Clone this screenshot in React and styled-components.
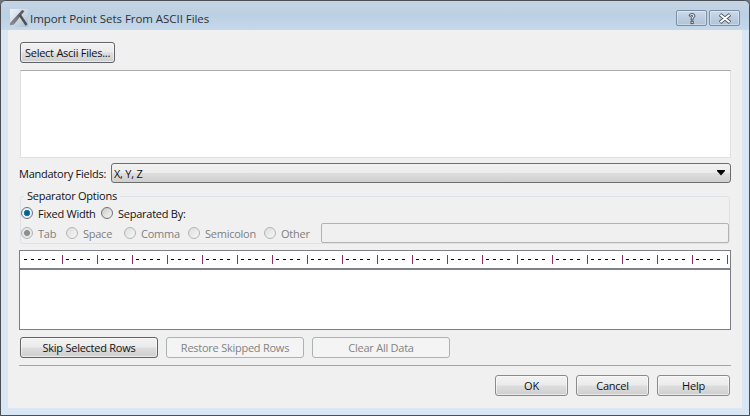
import React from 'react'
import styled, { createGlobalStyle } from 'styled-components'

const GlobalStyle = createGlobalStyle`
    html, body {
        margin: 0;
        padding: 0;
        background: #6f7378;
    }
    * { box-sizing: border-box; }
`

const Window = styled.div`
    width: 750px;
    height: 416px;
    display: flex;
    flex-direction: column;
    border: 1px solid #4a4f55;
    border-radius: 6px 6px 0 0;
    background: #d9e6f3;
    font-family: "Open Sans", "Noto Sans", "Liberation Sans", sans-serif;
    font-size: 11px;
    letter-spacing: -0.25px;
    color: #111;
    overflow: hidden;
`

const TitleBar = styled.div`
    height: 29px;
    flex: none;
    display: flex;
    align-items: center;
    padding: 5px 9px 0 9px;
    background: linear-gradient(180deg, #c4d4e4 0%, #bcd0e3 50%, #c6d9eb 100%);
`

const TitleText = styled.span`
    margin-left: 2px;
    font-size: 11.5px;
    letter-spacing: -0.05px;
    color: #2c3137;
    flex: 1;
    white-space: nowrap;
`

const CaptionButton = styled.div`
    width: 31px;
    height: 16px;
    margin-left: 2px;
    display: flex;
    align-items: center;
    justify-content: center;
    border: 1px solid #7c8ea6;
    border-radius: 2px;
    background: linear-gradient(180deg, #ccdaea 0%, #bccde0 50%, #afc3d8 100%);
    box-shadow: inset 0 0 0 1px rgba(255, 255, 255, 0.35);
`

const Client = styled.div`
    flex: 1;
    margin: 0 7px 7px 7px;
    padding: 12px 12px 0 12px;
    display: flex;
    flex-direction: column;
    background: #f0f0f0;
`

const buttonFace = `
    display: flex;
    align-items: center;
    justify-content: center;
    height: 21px;
    border-radius: 3px;
    padding: 0;
    white-space: nowrap;
`

const PushButton = styled.div`
    ${buttonFace}
    width: ${props => props.$width}px;
    color: #111;
    border: 1px solid ${props => props.$strong ? '#5f6266' : '#8a8a8a'};
    background: linear-gradient(180deg, #f2f2f2 0%, #ebebeb 48%, #dddddd 52%, #cfcfcf 100%);
    box-shadow: inset 0 0 0 1px rgba(255, 255, 255, 0.55);
`

const DisabledButton = styled.div`
    ${buttonFace}
    width: ${props => props.$width}px;
    color: #838383;
    border: 1px solid #adb2b5;
    background: #f4f4f4;
`

const FilesList = styled.div`
    height: 88px;
    margin: 7px -1px 0 0;
    background: #fff;
    border: 1px solid #dfdfdf;
    border-top-color: #ababab;
`

const FieldsRow = styled.div`
    height: 20px;
    margin: 5px -1px 0 -1px;
    display: flex;
    align-items: center;
`

const FieldLabel = styled.span`
    width: 92px;
    flex: none;
    white-space: nowrap;
`

const Combo = styled.div`
    flex: 1;
    height: 20px;
    display: flex;
    align-items: center;
    justify-content: space-between;
    padding: 0 5px 0 2px;
    border: 1px solid #6d6d6d;
    border-radius: 3px;
    background: linear-gradient(180deg, #f2f2f2 0%, #ebebeb 48%, #dddddd 52%, #cfcfcf 100%);
`

const GroupBox = styled.fieldset`
    height: 55px;
    margin: 6px 0 0 0;
    padding: 0;
    border: 1px solid #dce2e8;
    border-radius: 3px;
    min-width: 0;
`

const GroupTitle = styled.legend`
    margin-left: 3px;
    padding: 0 3px;
    line-height: 14px;
`

const OptionRow = styled.div`
    height: 20px;
    display: flex;
    align-items: center;
`

const Option = styled.span`
    display: flex;
    align-items: center;
    gap: 5px;
    width: ${props => props.$width}px;
    flex: none;
    white-space: nowrap;
    color: ${props => props.$disabled ? '#7f7f7f' : '#111'};
`

const RadioDot = styled.span`
    width: 12px;
    height: 12px;
    flex: none;
    border-radius: 50%;
    border: 1px solid ${props => props.$disabled ? '#b4b4b4' : '#6e7276'};
    background: ${props => {
        if (props.$disabled && props.$checked) return 'radial-gradient(circle, #8e8e8e 0 2.5px, #e4e4e4 3.5px, #f2f2f2 100%)'
        if (props.$disabled) return 'linear-gradient(135deg, #dedede, #f6f6f6)'
        if (props.$checked) return 'radial-gradient(circle, #0a5f8e 0 2px, #1f8fc4 3px, #e7eef4 3.5px, #f4f4f4 100%)'
        return 'linear-gradient(135deg, #c9c9c9, #f7f7f7)'
    }};
`

const SeparatorInput = styled.div`
    flex: 1;
    height: 20px;
    border: 1px solid #b2b2b2;
    border-radius: 2px;
    background: #f0f0f0;
`

const DataTable = styled.div`
    height: 80px;
    margin: 6px -1px 0 -1px;
    border: 1px solid #7b7e86;
    background: #fff;
    display: flex;
    flex-direction: column;
`

const RulerBar = styled.div`
    height: 19px;
    flex: none;
    border-bottom: 2px solid #7f828a;
    display: flex;
    align-items: flex-start;
`

const ButtonRow = styled.div`
    display: flex;
    gap: 8px;
    margin-top: 7px;
`

const Separator = styled.div`
    height: 1px;
    margin: 7px -1px 0 -1px;
    background: #a5a5a5;
`

const FooterRow = styled.div`
    display: flex;
    justify-content: flex-end;
    gap: 8px;
    margin-top: 9px;
`

const AppIcon = () => (
    <svg width="18" height="18" viewBox="0 0 18 18">
        <defs>
            <linearGradient id="iconBg" x1="0" y1="0" x2="1" y2="1">
                <stop offset="0" stopColor="#eef3f9" />
                <stop offset="1" stopColor="#aebfd2" />
            </linearGradient>
            <linearGradient id="iconHead" x1="0" y1="1" x2="1" y2="0">
                <stop offset="0" stopColor="#8f9097" />
                <stop offset="1" stopColor="#54545b" />
            </linearGradient>
        </defs>
        <rect width="18" height="18" fill="url(#iconBg)" />
        <path d="M0 14 L12 1 L14.5 2 L4 15.5 L0 16.5 Z" fill="url(#iconHead)" />
        <path d="M9.5 5.5 L16.5 16" stroke="#4f4f56" strokeWidth="2.4" />
    </svg>
)

const HelpGlyph = () => (
    <svg width="12" height="13" viewBox="0 0 12 13">
        <path d="M3 4 Q3 1.5 6 1.5 Q9 1.5 9 4 Q9 5.5 7 6.2 L7 8 L5.2 8 L5.2 5.4 Q7 5 7 4 Q7 3.2 6 3.2 Q5 3.2 5 4.2 Z" fill="#fff" stroke="#4a5360" strokeWidth="1" />
        <rect x="5" y="9.2" width="2.2" height="2.4" fill="#fff" stroke="#4a5360" strokeWidth="1" />
    </svg>
)

const CloseGlyph = () => (
    <svg width="14" height="11" viewBox="0 0 14 11">
        <path d="M2 1.5 L12 9.5 M12 1.5 L2 9.5" stroke="#4a5360" strokeWidth="3.6" />
        <path d="M2.4 1.8 L11.6 9.2 M11.6 1.8 L2.4 9.2" stroke="#fff" strokeWidth="2" />
    </svg>
)

const ComboArrow = () => (
    <svg width="8" height="6" viewBox="0 0 8 6">
        <path d="M0 0 H8 V1 L4 5.5 L0 1 Z" fill="#000" />
    </svg>
)

const tickCount = 20

const Ruler = () => {
    const ticks = Array.from({ length: tickCount }, (_, i) => Math.round(42 + i * 35))
    const dashes = [4, 11, 18, 25, 32]
    ticks.slice(0, -1).forEach(t => {
        for (let k = 0; k < 4; k++) dashes.push(t + 4 + k * 7)
    })
    return (
        <svg width="710" height="17" viewBox="0 0 710 17">
            {dashes.map(d => <rect key={d} x={d} y="8" width="3" height="1" fill="#000" />)}
            {ticks.map(t => <rect key={t} x={t} y="4" width="1" height="9" fill="#8a2f66" />)}
        </svg>
    )
}

const separators = [
    { label: 'Tab', width: 45, checked: true },
    { label: 'Space', width: 58 },
    { label: 'Comma', width: 64 },
    { label: 'Semicolon', width: 76 },
    { label: 'Other', width: 57 },
]

const App = () => (
    <>
        <GlobalStyle />
        <Window>
            <TitleBar>
                <AppIcon />
                <TitleText>Import Point Sets From ASCII Files</TitleText>
                <CaptionButton><HelpGlyph /></CaptionButton>
                <CaptionButton><CloseGlyph /></CaptionButton>
            </TitleBar>
            <Client>
                <PushButton $width={95} $strong>Select Ascii Files...</PushButton>
                <FilesList />
                <FieldsRow>
                    <FieldLabel>Mandatory Fields:</FieldLabel>
                    <Combo>
                        X, Y, Z
                        <ComboArrow />
                    </Combo>
                </FieldsRow>
                <GroupBox>
                    <GroupTitle>Separator Options</GroupTitle>
                    <OptionRow>
                        <Option $width={80}><RadioDot $checked />Fixed Width</Option>
                        <Option $width={100}><RadioDot />Separated By:</Option>
                    </OptionRow>
                    <OptionRow>
                        {separators.map(s => (
                            <Option key={s.label} $width={s.width} $disabled>
                                <RadioDot $disabled $checked={s.checked} />
                                {s.label}
                            </Option>
                        ))}
                        <SeparatorInput />
                    </OptionRow>
                </GroupBox>
                <DataTable>
                    <RulerBar><Ruler /></RulerBar>
                </DataTable>
                <ButtonRow>
                    <PushButton $width={138} $strong>Skip Selected Rows</PushButton>
                    <DisabledButton $width={138}>Restore Skipped Rows</DisabledButton>
                    <DisabledButton $width={138}>Clear All Data</DisabledButton>
                </ButtonRow>
                <Separator />
                <FooterRow>
                    <PushButton $width={73}>OK</PushButton>
                    <PushButton $width={73}>Cancel</PushButton>
                    <PushButton $width={73}>Help</PushButton>
                </FooterRow>
            </Client>
        </Window>
    </>
)

export default App
